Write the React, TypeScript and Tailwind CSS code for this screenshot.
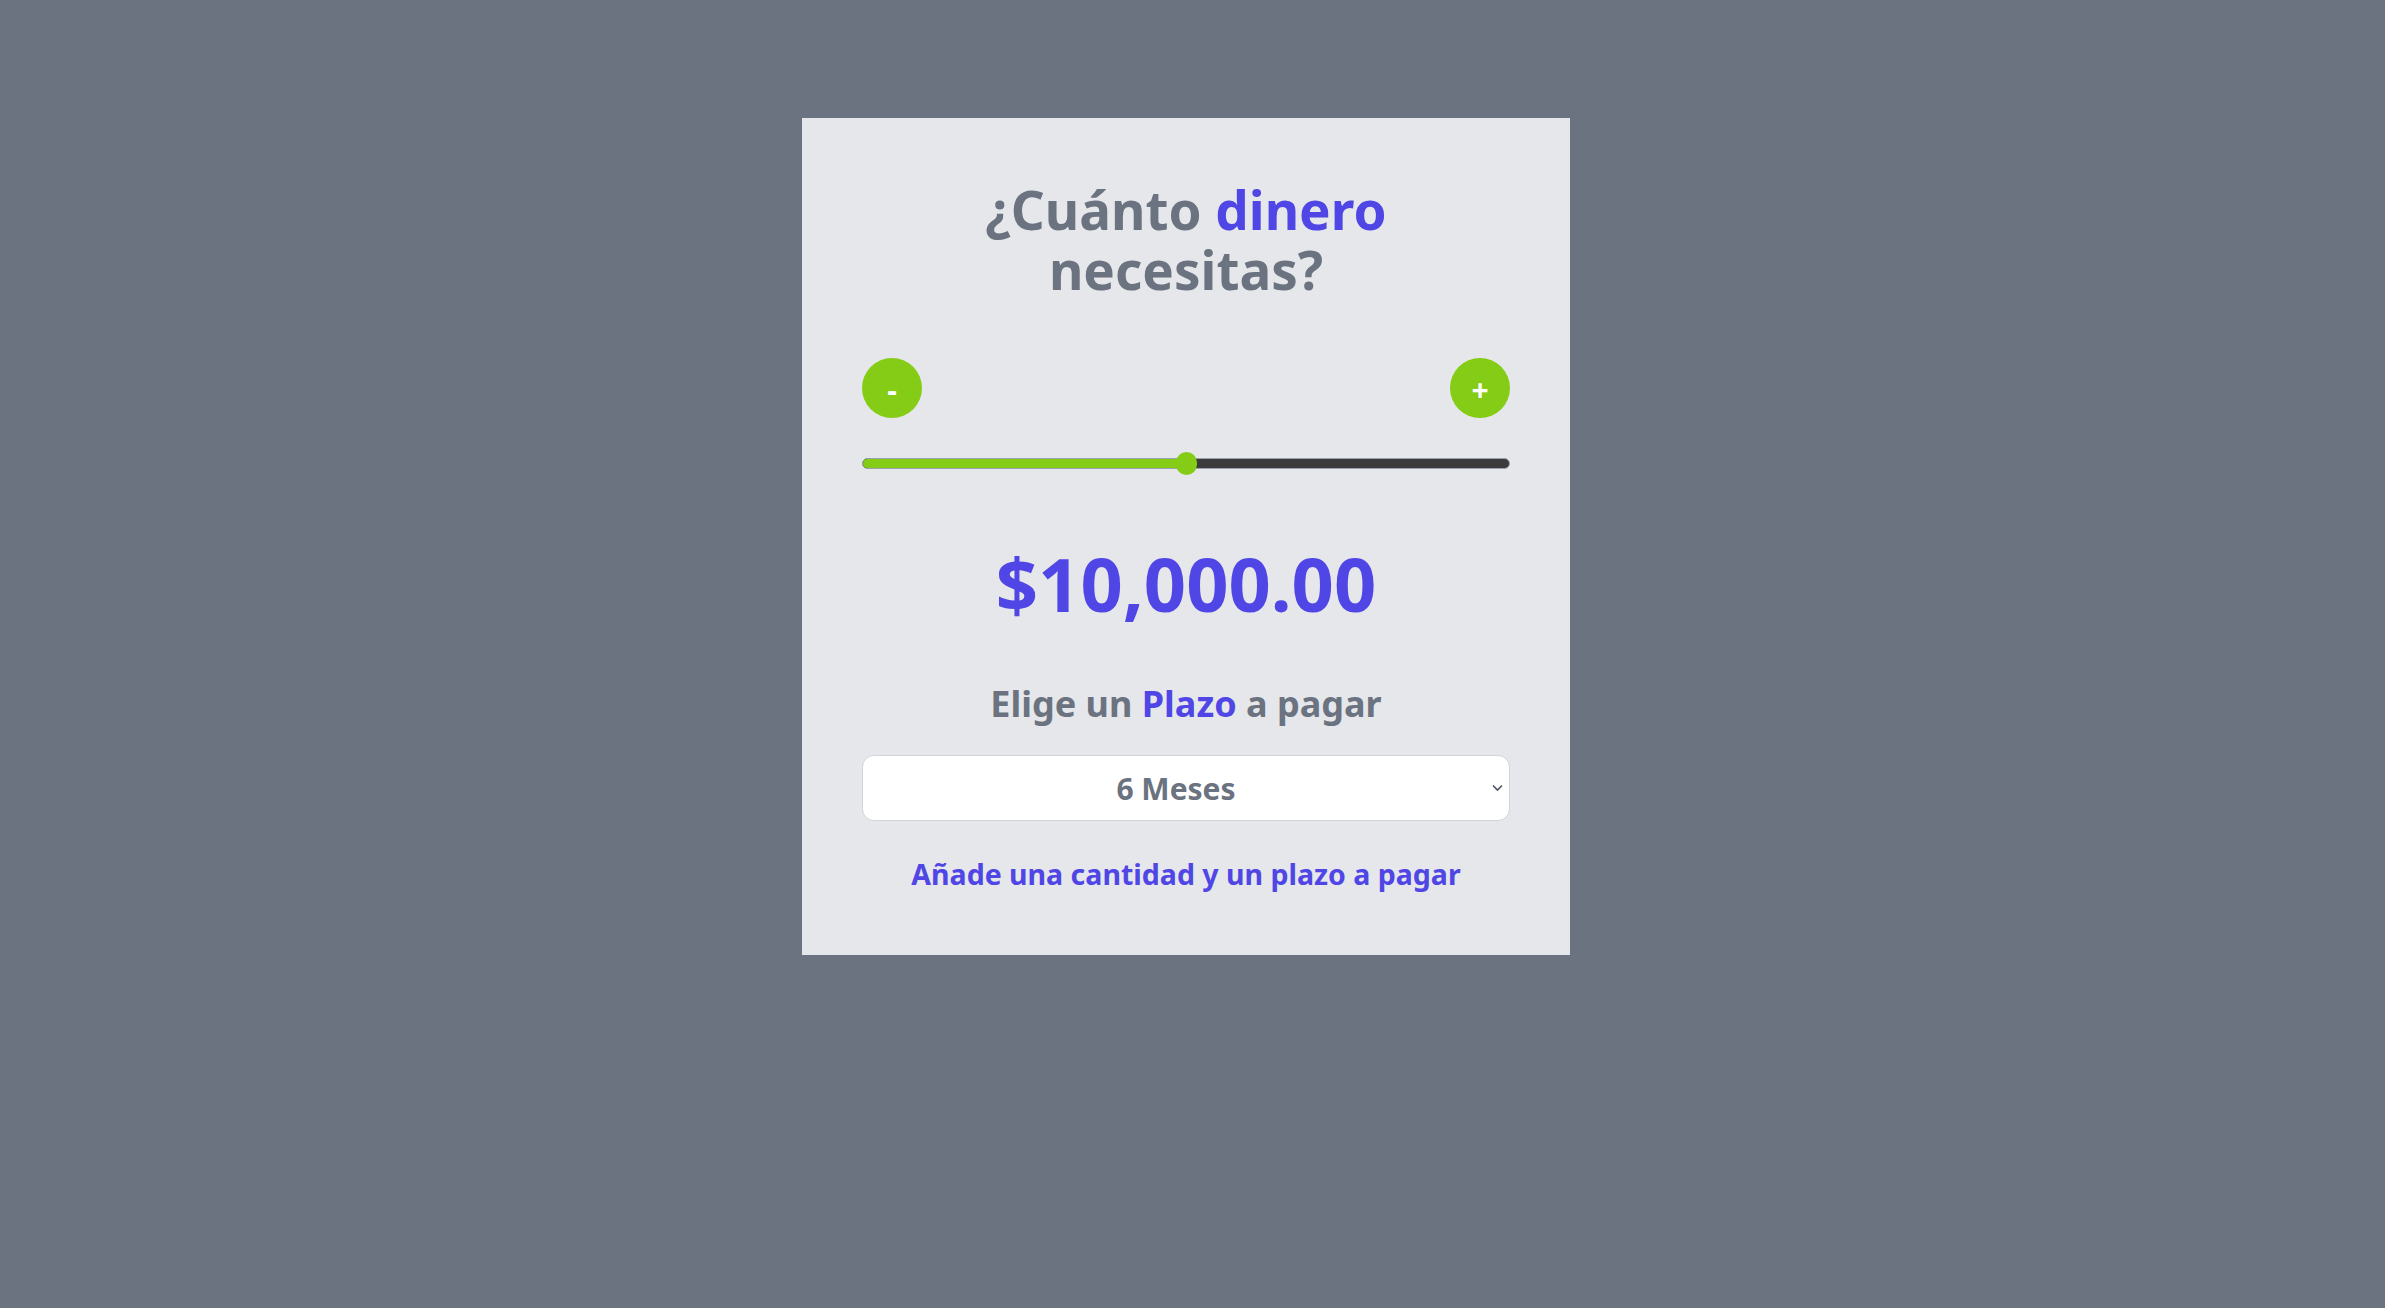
import React from "react";

const font = { fontFamily: '"Noto Sans", "Open Sans", sans-serif' };

export default function App() {
  return (
    <div className="min-h-screen w-full bg-[#6b7280] pt-[118px] pr-[13px]" style={font}>
      <div className="mx-auto w-[768px] bg-[#e5e7eb] p-15">
        <h1 className="mx-auto w-[420px] pt-[2px] text-center text-[53px] leading-[60px] font-bold text-[#6b7280]">
          ¿Cuánto <span className="text-[#4f46e5]">dinero</span> necesitas?
        </h1>

        <div className="mt-[58px] flex items-center justify-between">
          <button className="flex h-15 w-15 items-center justify-center rounded-full bg-[#84cc16] pt-1 text-[30px] leading-none font-bold text-white">
            -
          </button>
          <button className="flex h-15 w-15 items-center justify-center rounded-full bg-[#84cc16] pt-1 text-[30px] leading-none font-bold text-white">
            +
          </button>
        </div>

        {/* slider */}
        <div className="relative mt-[34px] flex h-[23px] items-center">
          <div className="flex h-[11px] w-full overflow-hidden rounded-full border border-gray-400 bg-[#3b3b3b]">
            <div className="h-full w-1/2 bg-[#84cc16]" />
          </div>
          <div className="absolute top-0 left-[calc(50%-10px)] h-[23px] w-[21px] rounded-full bg-[#84cc16]" />
        </div>

        <p className="mt-[72px] text-center text-[74px] leading-none font-bold text-[#4f46e5]">
          $10,000.00
        </p>

        <p className="mt-[59px] text-center text-[36px] leading-[48px] font-bold text-[#6b7280]">
          Elige un <span className="text-[#4f46e5]">Plazo</span> a pagar
        </p>

        <div className="relative mt-[27px]">
          <select
            defaultValue="6"
            className="h-[66px] w-full appearance-none rounded-xl border border-[#d1d5db] bg-white pr-5 text-center text-[30px] font-bold text-[#6b7280] outline-none [text-align-last:center]"
          >
            <option value="3">3 Meses</option>
            <option value="6">6 Meses</option>
            <option value="12">12 Meses</option>
            <option value="24">24 Meses</option>
          </select>
          <svg
            className="pointer-events-none absolute top-[29px] right-[7px]"
            width="11"
            height="8"
            viewBox="0 0 11 8"
            fill="none"
          >
            <path d="M1 1.5 5.5 6 10 1.5" stroke="#4b5563" strokeWidth="1.6" />
          </svg>
        </div>

        <p className="mt-[32px] text-center text-[28.5px] leading-[42px] font-bold text-[#4f46e5]">
          Añade una cantidad y un plazo a pagar
        </p>
      </div>
    </div>
  );
}
